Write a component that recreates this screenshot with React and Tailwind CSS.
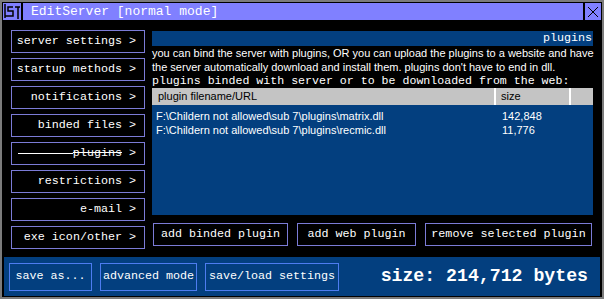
const mono = { fontFamily: '"Liberation Mono", "Courier New", monospace' };

const menu = [
  'server settings >',
  'startup methods >',
  'notifications >',
  'binded files >',
  'plugins',
  'restrictions >',
  'e-mail >',
  'exe icon/other >',
];

const plugins = [
  { file: 'F:\\Childern not allowed\\sub 7\\plugins\\matrix.dll', size: '142,848' },
  { file: 'F:\\Childern not allowed\\sub 7\\plugins\\recmic.dll', size: '11,776' },
];

function MenuButton({ label }) {
  if (label === 'plugins') {
    return (
      <div className="h-[23px] border border-[#7b7bd6] flex items-center pl-[6px] pr-[8px] text-white text-[11.7px]">
        <span className="flex-1 h-px bg-white" />
        <span className="line-through">plugins</span>
        <span className="whitespace-pre"> &gt;</span>
      </div>
    );
  }
  return (
    <div className="h-[23px] border border-[#7b7bd6] flex items-center justify-end pr-[8px] text-white text-[11.7px] whitespace-pre">
      {label}
    </div>
  );
}

function ActionButton({ w, children }) {
  return (
    <div className={`${w} h-[23px] border border-[#7b7bd6] flex items-center justify-center text-white text-[11.7px] whitespace-pre`}>
      {children}
    </div>
  );
}

export default function App() {
  return (
    <div className="w-[604px] h-[299px] bg-[#7c7c7c] p-[2px] overflow-hidden" style={mono}>
      <div className="h-full bg-black p-px flex flex-col">
        {/* title bar */}
        <div className="h-[17px] flex shrink-0">
          <div className="w-[18px] bg-[#8080ff] flex items-center justify-center">
            <svg width="16" height="15" viewBox="0 0 16 15" fill="none" stroke="#000" strokeWidth="1.5">
              <path d="M1 0 V14" />
              <path d="M9 3 H4 V7 H9 V12 H1" />
              <path d="M11 3 H16 M14 3 V15" />
            </svg>
          </div>
          <div className="w-[2px] bg-black" />
          <div className="flex-1 bg-[#8080ff] pl-[8px] flex items-center text-white text-[13px] whitespace-pre">
            EditServer [normal mode]
          </div>
          <div className="w-[2px] bg-black" />
          <div className="w-[16px] bg-[#8080ff] flex items-center justify-center">
            <svg width="12" height="12" viewBox="0 0 12 12" stroke="#000" strokeWidth="1">
              <path d="M1 1 L11 11 M11 1 L1 11" />
            </svg>
          </div>
        </div>

        {/* content */}
        <div className="flex px-[8px] pt-[10px] gap-[7px]">
          <div className="w-[134px] flex flex-col gap-[5px]">
            {menu.map((m) => (
              <MenuButton key={m} label={m} />
            ))}
          </div>

          <div className="w-[441px] pt-px flex flex-col">
            <div className="h-[15px] bg-[#033f7f] text-white text-[11.7px] flex items-center justify-end pr-px">
              plugins
            </div>
            <div className="text-white text-[11px] leading-[14px] whitespace-nowrap" style={{ fontFamily: '"Liberation Sans", Arial, sans-serif' }}>
              <div>you can bind the server with plugins, OR you can upload the plugins to a website and have</div>
              <div>the server automatically download and install them. plugins don't have to end in dll.</div>
            </div>
            <div className="h-[14px] text-white text-[11.6px] leading-[14px] whitespace-pre">
              plugins binded with server or to be downloaded from the web:
            </div>

            <div className="flex flex-col" style={{ fontFamily: '"Liberation Sans", Arial, sans-serif' }}>
              <div className="h-[17px] flex bg-[#c4c4c4] text-black text-[11px]">
                <div className="w-[344px] pl-[6px] flex items-center border-r-2 border-white">plugin filename/URL</div>
                <div className="w-[75px] pl-[5px] flex items-center border-r-2 border-white">size</div>
                <div className="flex-1" />
              </div>
              <div className="h-[110px] bg-[#033f7f] pt-[4px] text-white text-[11px]">
                {plugins.map((p) => (
                  <div key={p.file} className="h-[14px] flex items-center">
                    <div className="w-[346px] pl-[4px] whitespace-nowrap">{p.file}</div>
                    <div className="pl-[4px]">{p.size}</div>
                  </div>
                ))}
              </div>
            </div>

            <div className="flex mt-[8px] ml-px gap-[9px]">
              <ActionButton w="w-[135px]">add binded plugin</ActionButton>
              <ActionButton w="w-[119px]">add web plugin</ActionButton>
              <ActionButton w="w-[167px]">remove selected plugin</ActionButton>
            </div>
          </div>
        </div>

        {/* bottom bar */}
        <div className="mt-[8px] mx-px h-[39px] bg-[#033f7f] flex items-start pl-[5px] pt-[6px] gap-[8px] shrink-0">
          <div className="w-[83px] h-[28px] border border-[#4d7cf0] flex items-center justify-center text-white text-[11.7px] whitespace-pre">save as...</div>
          <div className="w-[97px] h-[28px] border border-[#4d7cf0] flex items-center justify-center text-white text-[11.7px] whitespace-pre">advanced mode</div>
          <div className="w-[134px] h-[28px] border border-[#4d7cf0] flex items-center justify-center text-white text-[11.7px] whitespace-pre">save/load settings</div>
          <div className="flex-1 h-[28px] flex items-center justify-end pr-[12px] text-white text-[18.2px] font-bold whitespace-pre">
            size: 214,712 bytes
          </div>
        </div>
      </div>
    </div>
  );
}
